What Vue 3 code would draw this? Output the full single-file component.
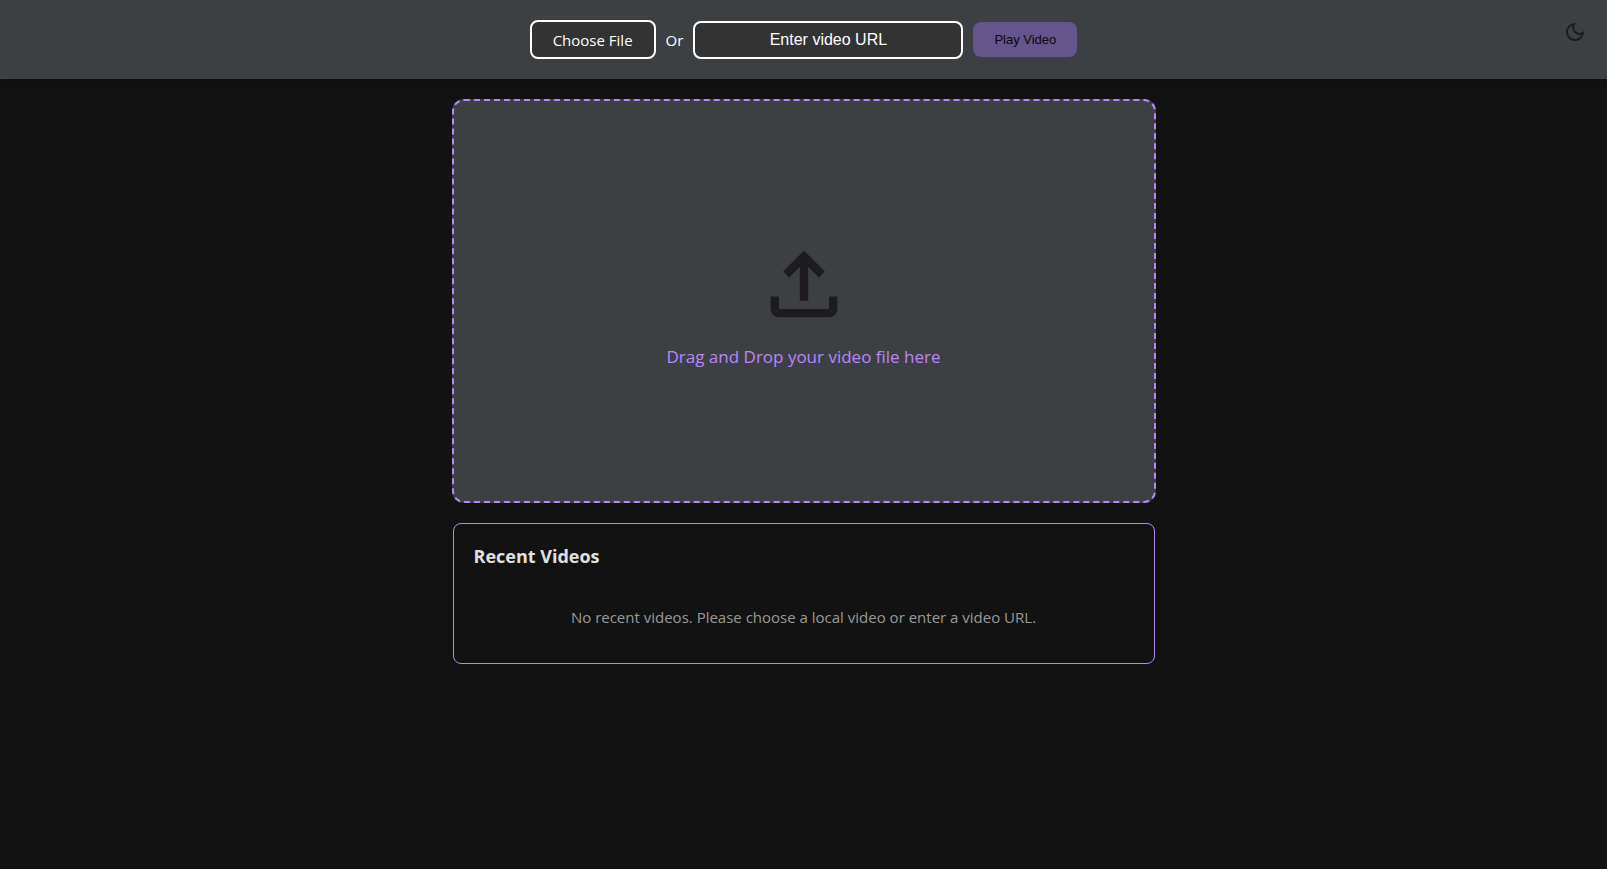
<script setup>
import { ref } from 'vue'

const videoUrl = ref('')
const fileInput = ref(null)
</script>

<template>
  <div class="page">
    <header class="toolbar">
      <button class="choose" type="button" @click="fileInput.click()">Choose File</button>
      <input ref="fileInput" type="file" accept="video/*" aria-label="Video file" hidden />
      <span class="or">Or</span>
      <input v-model="videoUrl" class="url" type="text" placeholder="Enter video URL" aria-label="Video URL" />
      <button class="play" type="button">Play Video</button>
      <button class="theme" type="button" aria-label="Toggle dark mode">
        <svg viewBox="0 -960 960 960" width="24" height="24" aria-hidden="true">
          <path d="M480-120q-150 0-255-105T120-480q0-150 105-255t255-105q14 0 27.500 1t26.500 3q-41 29-65.500 75.500T444-660q0 90 63 153t153 63q55 0 101-24.500t75-65.500q2 13 3 26.500t1 27.500q0 150-105 255T480-120Zm0-80q88 0 158-48.500T740-375q-20 5-40 8t-40 3q-123 0-209.500-86.500T364-660q0-20 3-40t8-40q-78 32-126.500 102T200-480q0 116 82 198t198 82Z" />
        </svg>
      </button>
    </header>

    <main class="content">
      <section class="drop">
        <svg viewBox="0 0 24 24" width="100" height="100" aria-hidden="true">
          <path d="M11 16V7.850l-2.600 2.600L7 9l5-5 5 5-1.400 1.450-2.600-2.600V16h-2Zm-5 4q-.825 0-1.413-.588T4 18v-3h2v3h12v-3h2v3q0 .825-.587 1.413T18 20H6Z" />
        </svg>
        <p>Drag and Drop your video file here</p>
      </section>

      <section class="recent">
        <h2>Recent Videos</h2>
        <p>No recent videos. Please choose a local video or enter a video URL.</p>
      </section>
    </main>
  </div>
</template>

<style>
body {
  margin: 0;
  background: #121212;
}
</style>

<style scoped>
.page {
  min-height: 100vh;
  background: #121212;
  color: #e0e0e0;
  font-family: "Segoe UI", "Open Sans", "Noto Sans", sans-serif;
  font-size: 15px;
  line-height: 20px;
}

.page * {
  box-sizing: border-box;
}

svg {
  display: block;
  fill: #1d1b20;
}

.toolbar {
  position: relative;
  display: flex;
  align-items: center;
  justify-content: center;
  gap: 10px;
  padding: 20px;
  background: #3c4043;
  box-shadow: 0 2px 10px rgba(0, 0, 0, 0.1);
}

.choose,
.url {
  border: 2px solid #fff;
  border-radius: 8px;
  background: #333;
  color: #fff;
}

.choose {
  height: 39px;
  padding: 0 21px;
  font: inherit;
  cursor: pointer;
}

.or {
  color: #fff;
}

.url {
  width: 270px;
  height: 38px;
  padding: 8px;
  font: 16px "Liberation Sans", Arial, sans-serif;
  text-align: center;
}

.url::placeholder {
  color: #fff;
  opacity: 1;
}

.play {
  height: 35px;
  padding: 0 21px;
  border: 0;
  border-radius: 8px;
  background: #66558c;
  color: #080709;
  font: 13px "Liberation Sans", Arial, sans-serif;
}

.theme {
  position: absolute;
  top: 20px;
  right: 20px;
  padding: 0;
  border: 0;
  background: none;
  cursor: pointer;
}

.content {
  display: flex;
  flex-direction: column;
  align-items: center;
  gap: 20px;
  padding: 20px;
}

.drop {
  display: flex;
  flex-direction: column;
  align-items: center;
  justify-content: center;
  gap: 11px;
  width: 100%;
  max-width: 704px;
  min-height: 404px;
  border: 2px dashed #bb86fc;
  border-radius: 12px;
  background: #3c4043;
}

.drop p {
  margin: 0;
  color: #bb86fc;
  font-size: 17px;
  line-height: 24px;
}

.recent {
  width: 100%;
  max-width: 702px;
  padding: 20px;
  border: 1px solid #bb86fc;
  border-radius: 8px;
}

.recent h2 {
  margin: 0;
  font-size: 18px;
  line-height: 24px;
}

.recent p {
  margin: 19px 0 0;
  padding: 20px 20px 16px;
  color: #9a9a9a;
  text-align: center;
}
</style>
